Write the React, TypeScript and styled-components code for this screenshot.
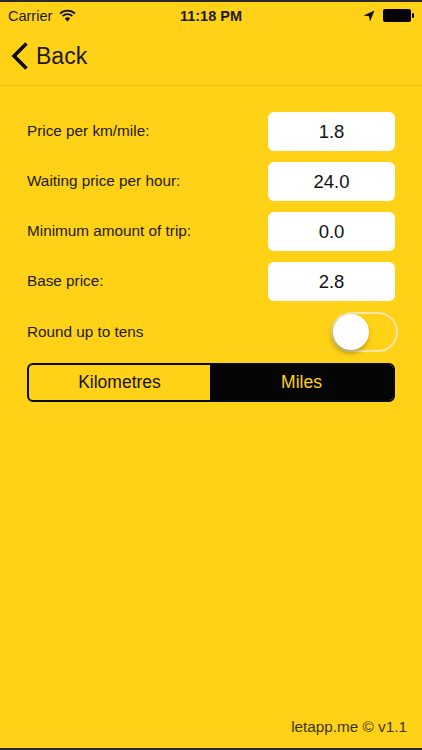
import React from 'react'
import styled, { createGlobalStyle } from 'styled-components'

const GlobalStyle = createGlobalStyle`
  html, body {
    margin: 0;
    padding: 0;
    background: #ffd217;
  }
  * {
    box-sizing: border-box;
  }
`

const Screen = styled.div`
  width: 422px;
  height: 750px;
  display: flex;
  flex-direction: column;
  overflow: hidden;
  background: #ffd217;
  color: #1c1a0c;
  font-family: "Liberation Sans", Arial, sans-serif;
  border-top: 2px solid #2a2720;
  border-bottom: 2px solid #2a2720;
`

const StatusBar = styled.div`
  height: 27px;
  flex: none;
  display: grid;
  grid-template-columns: 1fr auto 1fr;
  align-items: center;
  padding: 0 8px 0 8px;
  font-size: 14.5px;
`

const StatusLeft = styled.div`
  display: flex;
  align-items: center;
  gap: 7px;
`

const StatusRight = styled.div`
  display: flex;
  align-items: center;
  justify-content: flex-end;
  gap: 8px;
`

const Clock = styled.div`
  font-weight: 700;
  font-size: 14.5px;
`

const NavBar = styled.div`
  height: 57px;
  flex: none;
  display: flex;
  align-items: center;
  gap: 8px;
  padding: 0 0 2px 11px;
  border-bottom: 1px solid #e8bd14;
  font-size: 23px;
`

const Form = styled.div`
  flex: 1;
  display: flex;
  flex-direction: column;
  padding: 26px 27px 0;
`

const Row = styled.div`
  height: 39px;
  margin-bottom: 11px;
  display: flex;
  align-items: center;
  justify-content: space-between;
`

const Label = styled.div<{ $raised?: boolean }>`
  font-size: 15.3px;
  padding-bottom: ${(p) => (p.$raised ? '2px' : '0')};
`

const ValueBox = styled.div`
  width: 127px;
  height: 39px;
  display: flex;
  align-items: center;
  justify-content: center;
  background: #fff;
  border-radius: 6px;
  font-size: 18.5px;
  color: #111;
`

const ToggleRow = styled.div`
  height: 40px;
  margin-bottom: 11px;
  margin-right: -3px;
  display: flex;
  align-items: center;
  justify-content: space-between;
`

const Toggle = styled.div`
  position: relative;
  width: 67px;
  height: 40px;
  border: 2px solid #f3e6a8;
  border-radius: 20px;
`

const Knob = styled.div`
  position: absolute;
  left: 0;
  top: 0;
  width: 36px;
  height: 36px;
  border-radius: 50%;
  background: #fff;
  box-shadow: -1px 3px 5px rgba(60, 50, 0, 0.4);
`

const Segmented = styled.div`
  height: 39px;
  display: grid;
  grid-template-columns: 181px 1fr;
  border: 2px solid #0a0a0a;
  border-radius: 6px;
  overflow: hidden;
`

const Segment = styled.div<{ $active?: boolean }>`
  display: flex;
  align-items: center;
  justify-content: center;
  font-size: 17.5px;
  background: ${(p) => (p.$active ? '#050505' : 'transparent')};
  color: ${(p) => (p.$active ? '#ffd217' : '#141204')};
`

const Footer = styled.div`
  flex: none;
  height: 30px;
  padding: 0 15px 0 0;
  text-align: right;
  font-size: 15.3px;
  color: #3a3410;
`

const fields = [
  { label: 'Price per km/mile:', value: '1.8' },
  { label: 'Waiting price per hour:', value: '24.0' },
  { label: 'Minimum amount of trip:', value: '0.0' },
  { label: 'Base price:', value: '2.8' },
]

function App() {
  return (
    <Screen>
      <GlobalStyle />
      <StatusBar>
        <StatusLeft>
          <span>Carrier</span>
          <svg width="17" height="13" viewBox="0 0 17 13">
            <path d="M1 4.6a10.8 10.8 0 0 1 15 0" fill="none" stroke="#111" strokeWidth="1.7" />
            <path d="M3.6 7.2a7 7 0 0 1 9.8 0" fill="none" stroke="#111" strokeWidth="1.7" />
            <path d="M8.5 12.6 5.8 9.6a3.9 3.9 0 0 1 5.4 0z" fill="#111" />
          </svg>
        </StatusLeft>
        <Clock>11:18 PM</Clock>
        <StatusRight>
          <svg width="12" height="12" viewBox="0 0 12 12">
            <path d="M0.5 5.6 11.5 0.5 7 11.5 6 6.2z" fill="#111" />
          </svg>
          <svg width="31" height="13" viewBox="0 0 31 13">
            <rect x="0" y="0" width="28" height="13" rx="2" fill="#050505" />
            <rect x="29" y="4" width="2" height="5" rx="1" fill="#050505" />
          </svg>
        </StatusRight>
      </StatusBar>
      <NavBar>
        <svg width="17" height="28" viewBox="0 0 17 28">
          <path d="M15.5 1.5 3 14l12.5 12.5" fill="none" stroke="#0a0a0a" strokeWidth="3.6" />
        </svg>
        <span>Back</span>
      </NavBar>
      <Form>
        {fields.map((f) => (
          <Row key={f.label}>
            <Label $raised>{f.label}</Label>
            <ValueBox>{f.value}</ValueBox>
          </Row>
        ))}
        <ToggleRow>
          <Label>Round up to tens</Label>
          <Toggle>
            <Knob />
          </Toggle>
        </ToggleRow>
        <Segmented>
          <Segment>Kilometres</Segment>
          <Segment $active>Miles</Segment>
        </Segmented>
      </Form>
      <Footer>letapp.me © v1.1</Footer>
    </Screen>
  )
}

export default App
